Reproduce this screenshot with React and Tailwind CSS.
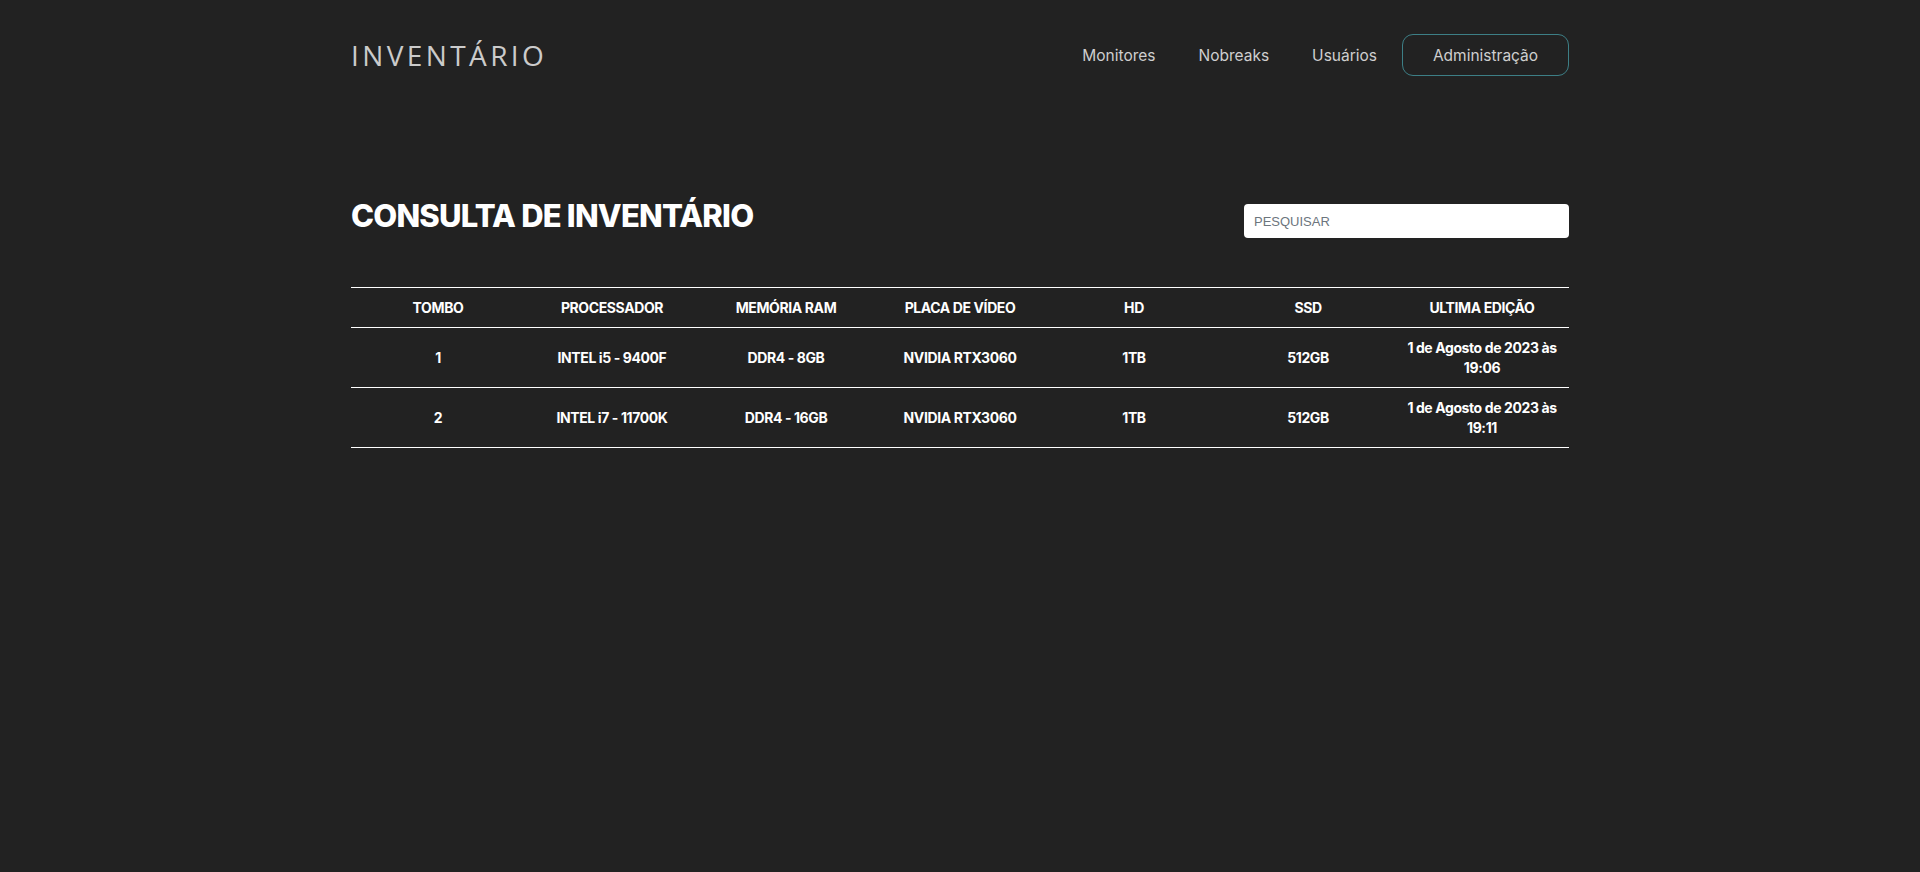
import React from "react";

const rows = [
  { tombo: "1", cpu: "INTEL i5 - 9400F", ram: "DDR4 - 8GB", gpu: "NVIDIA RTX3060", hd: "1TB", ssd: "512GB", date: "1 de Agosto de 2023 às", time: "19:06" },
  { tombo: "2", cpu: "INTEL i7 - 11700K", ram: "DDR4 - 16GB", gpu: "NVIDIA RTX3060", hd: "1TB", ssd: "512GB", date: "1 de Agosto de 2023 às", time: "19:11" },
];

const headers = ["TOMBO", "PROCESSADOR", "MEMÓRIA RAM", "PLACA DE VÍDEO", "HD", "SSD", "ULTIMA EDIÇÃO"];

export default function App() {
  return (
    <div className="min-h-[872px] bg-[#222222] font-['Inter',sans-serif]">
      <div className="w-[1218px] mx-auto">
        <header className="flex items-center justify-between pt-[34px]">
          <div className="font-['Open_Sans',sans-serif] font-normal text-[28px] leading-[42px] tracking-[3.4px] text-[#cbcbcb]">
            INVENTÁRIO
          </div>
          <nav className="flex items-center text-[15.5px] text-[#cfcfcf]">
            <a className="mr-[43px] pt-[2px]">Monitores</a>
            <a className="mr-[43px] pt-[2px]">Nobreaks</a>
            <a className="mr-[25px] pt-[2px]">Usuários</a>
            <a className="h-[42px] w-[167px] pt-[2px] flex items-center justify-center rounded-[11px] border border-[#3d7f86]">
              Administração
            </a>
          </nav>
        </header>

        <div className="flex items-start justify-between mt-[120px]">
          <h1 className="text-[31px] leading-[40px] font-extrabold text-white tracking-[-0.8px]">
            CONSULTA DE INVENTÁRIO
          </h1>
          <input
            type="text"
            placeholder="PESQUISAR"
            className="mt-[8px] w-[325px] h-[34px] rounded-[4px] bg-white px-[10px] font-['Liberation_Sans',sans-serif] text-[13px] text-[#333] placeholder:text-[#6c757d] outline-none"
          />
        </div>

        <table className="mt-[49px] w-full table-fixed border-collapse border-t border-white text-white text-[14px] leading-[20px] font-bold tracking-[-0.4px]">
          <thead>
            <tr className="border-b border-white">
              {headers.map((h) => (
                <th key={h} className="pt-[10px] pb-[9px] px-[4px] text-center font-bold">
                  {h}
                </th>
              ))}
            </tr>
          </thead>
          <tbody>
            {rows.map((r) => (
              <tr key={r.tombo} className="border-b border-white">
                <td className="pt-[10px] pb-[9px] px-[4px] text-center">{r.tombo}</td>
                <td className="pt-[10px] pb-[9px] px-[4px] text-center">{r.cpu}</td>
                <td className="pt-[10px] pb-[9px] px-[4px] text-center">{r.ram}</td>
                <td className="pt-[10px] pb-[9px] px-[4px] text-center">{r.gpu}</td>
                <td className="pt-[10px] pb-[9px] px-[4px] text-center">{r.hd}</td>
                <td className="pt-[10px] pb-[9px] px-[4px] text-center">{r.ssd}</td>
                <td className="pt-[10px] pb-[9px] px-[4px] text-center">
                  {r.date}
                  <br />
                  {r.time}
                </td>
              </tr>
            ))}
          </tbody>
        </table>
      </div>
    </div>
  );
}
